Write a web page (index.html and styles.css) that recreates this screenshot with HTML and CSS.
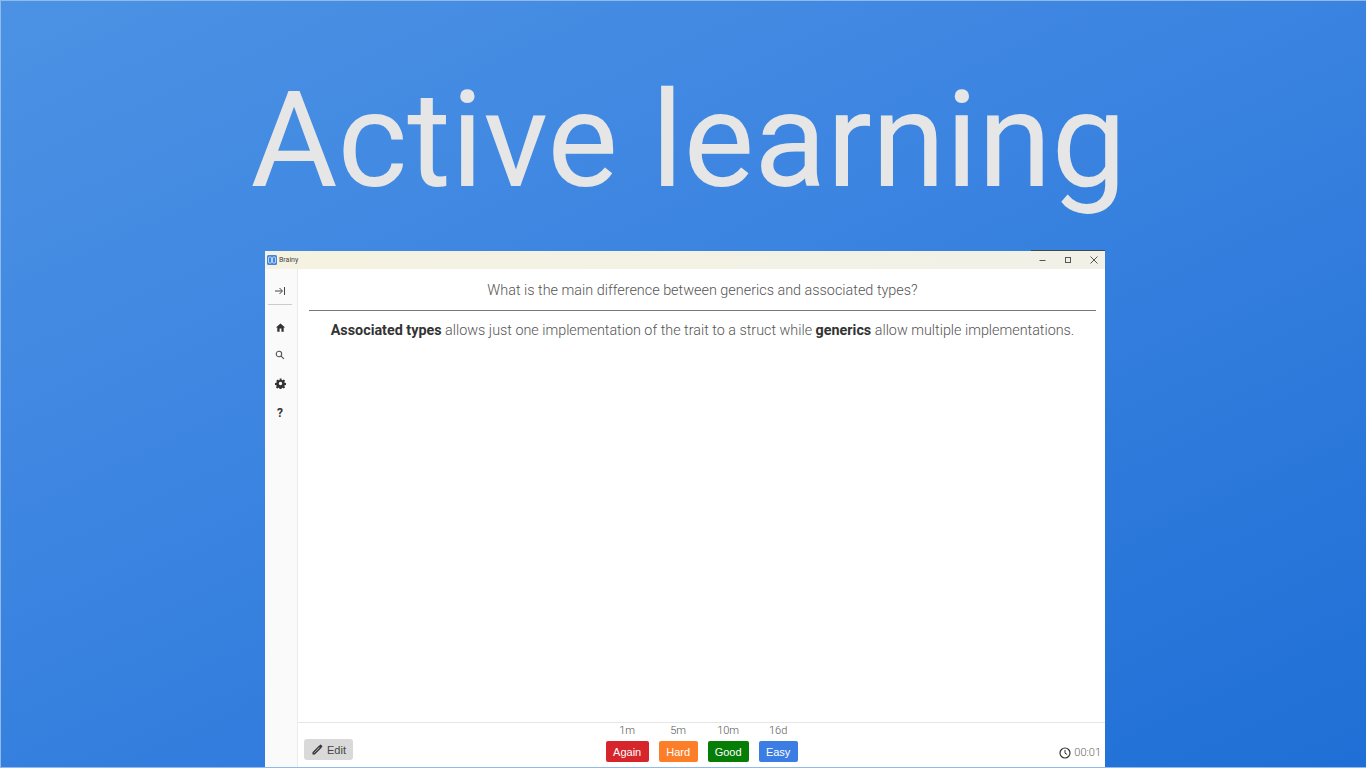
FILE: index.html
```html
<!DOCTYPE html>
<html lang="en">
<head>
    <meta charset="UTF-8" />
    <meta name="viewport" content="width=device-width, initial-scale=1" />
    <title>Active learning</title>
    <link rel="stylesheet" href="styles.css">
</head>
<body>
    <div class="slide">
        <h1 class="headline">Active learning</h1>

        <div class="window">
            <div class="titlebar">
                <svg class="app-icon" viewBox="0 0 10 10" width="10" height="10">
                    <rect width="10" height="10" rx="1.5" fill="#3f86e0" />
                    <rect x="1.5" y="2" width="3" height="6" rx="1" fill="none" stroke="#dbe9fa" stroke-width="0.8" />
                    <rect x="5.5" y="2" width="3" height="6" rx="1" fill="none" stroke="#dbe9fa" stroke-width="0.8" />
                </svg>
                <span class="app-name">Brainy</span>
                <div class="window-controls">
                    <svg viewBox="0 0 10 10" width="10" height="10"><path d="M2.500 5.500h6" stroke="#555" fill="none" /></svg>
                    <svg viewBox="0 0 10 10" width="10" height="10"><rect x="2.500" y="2.500" width="5" height="5" stroke="#555" fill="none" /></svg>
                    <svg viewBox="0 0 10 10" width="10" height="10"><path d="M1.500 1.500l7 7M8.500 1.500l-7 7" stroke="#555" fill="none" /></svg>
                </div>
            </div>

            <div class="app-body">
                <nav class="sidebar">
                    <div class="nav-top">
                        <svg viewBox="0 0 12 12" width="12" height="12"><path d="M1 6h7M5.500 3l3 3-3 3M10.500 2v8" stroke="#444" stroke-width="1" fill="none" /></svg>
                    </div>
                    <div class="nav-item">
                        <svg viewBox="0 0 24 24" width="11" height="11"><path d="M10 21v-7h4v7h5v-9h3L12 3 2 12h3v9z" fill="#333" /></svg>
                    </div>
                    <div class="nav-item">
                        <svg viewBox="0 0 24 24" width="10" height="10"><circle cx="9.500" cy="9.500" r="6.500" fill="none" stroke="#555" stroke-width="2.600" /><path d="M14.500 14.500l7 7" stroke="#555" stroke-width="2.800" /></svg>
                    </div>
                    <div class="nav-item">
                        <svg viewBox="0 0 24 24" width="11" height="11"><path fill="#333" fill-rule="evenodd" d="M10 1h4l.6 3.200 1.900.8 2.700-1.800 2.800 2.800-1.800 2.700.8 1.900 3 .5v4l-3 .5-.8 1.900 1.800 2.700-2.800 2.800-2.700-1.800-1.900.8-.6 3.200h-4l-.6-3.200-1.900-.8-2.700 1.800-2.800-2.800 1.800-2.700-.8-1.900-3-.5v-4l3-.5.8-1.900L3 6l2.800-2.800 2.700 1.800 1.900-.8zM12 8.300a3.700 3.700 0 1 0 0 7.400 3.700 3.700 0 0 0 0-7.400z" /></svg>
                    </div>
                    <div class="nav-item nav-help">?</div>
                </nav>

                <main class="card-pane">
                    <div class="card">
                        <div class="question">What is the main difference between generics and associated types?</div>
                        <hr class="divider" />
                        <div class="answer"><strong>Associated types</strong> allows just one implementation of the trait to a struct while <strong>generics</strong> allow multiple implementations.</div>
                    </div>

                    <div class="footer">
                        <button class="edit-btn">
                            <svg viewBox="0 0 24 24" width="13" height="13"><path fill="none" stroke="#333" stroke-width="2.500" d="M4 17.500V20h2.500L17.800 8.900l-2.700-2.700L4 17.500z" /><path fill="#333" d="M20.700 7.040a1 1 0 0 0 0-1.410l-2.340-2.340a1 1 0 0 0-1.410 0l-1.830 1.830 3.750 3.750 1.830-1.830z" /></svg>
                            Edit
                        </button>

                        <div class="grades">
                            <div class="grade">
                                <span class="interval">1m</span>
                                <button class="grade-btn again">Again</button>
                            </div>
                            <div class="grade">
                                <span class="interval">5m</span>
                                <button class="grade-btn hard">Hard</button>
                            </div>
                            <div class="grade">
                                <span class="interval">10m</span>
                                <button class="grade-btn good">Good</button>
                            </div>
                            <div class="grade">
                                <span class="interval">16d</span>
                                <button class="grade-btn easy">Easy</button>
                            </div>
                        </div>

                        <div class="timer">
                            <svg viewBox="0 0 12 12" width="12" height="12"><circle cx="6" cy="6" r="5" fill="none" stroke="#333" stroke-width="1.200" /><path d="M6 3v3.200l2.200 1.300" fill="none" stroke="#333" /></svg>
                            <span class="timer-text">00:01</span>
                        </div>
                    </div>
                </main>
            </div>
        </div>
    </div>
</body>
</html>
```

FILE: styles.css
```css
html, body {
    margin: 0;
    height: 100%;
    overflow: hidden;
}
body {
    font-family: Roboto, "Liberation Sans", sans-serif;
}
.slide {
    box-sizing: border-box;
    width: 1366px;
    height: 768px;
    padding: 1px 0 0 1px;
    border-top: 1px solid #8fbaee;
    border-left: 1px solid #8fbaee;
    border-bottom: 1px solid #8fbaee;
    background: linear-gradient(155deg, #4c92e4 0%, #3a83e0 45%, #1f6fd6 100%);
    display: flex;
    flex-direction: column;
    align-items: center;
}
.headline {
    margin: 0 0 0 9px;
    height: 249px;
    line-height: 278px;
    font-size: 133.400px;
    font-weight: 400;
    color: #e6e6e6;
    white-space: nowrap;
}
.window {
    width: 840px;
    height: 516px;
    margin-left: 2px;
    background: #fff;
    display: flex;
    flex-direction: column;
}
.titlebar {
    position: relative;
    height: 18px;
    flex: none;
    background: linear-gradient(90deg, #f5f2e1, #f1f1e8);
    display: flex;
    align-items: center;
    padding-left: 2px;
}
/* dark sliver along the top right of the captured window */
.titlebar::before {
    content: "";
    position: absolute;
    top: -1px;
    right: 0;
    width: 74px;
    height: 1px;
    background: #3c4a50;
}
.app-icon {
    margin-right: 2px;
}
.app-name {
    font-size: 7px;
    color: #444;
}
.window-controls {
    margin-left: auto;
    display: flex;
    gap: 16px;
    padding-right: 6px;
}
.app-body {
    flex: 1;
    display: flex;
    min-height: 0;
}
.sidebar {
    width: 32px;
    flex: none;
    background: #fafafa;
    border-right: 1px solid #ececec;
    display: flex;
    flex-direction: column;
    align-items: center;
}
.nav-top {
    width: 24px;
    height: 36px;
    flex: none;
    margin-left: -2px;
    box-sizing: border-box;
    padding-top: 8px;
    border-bottom: 1px solid #ccc;
    display: flex;
    align-items: center;
    justify-content: center;
}
.nav-item {
    height: 28px;
    flex: none;
    margin-left: -2px;
    display: flex;
    align-items: center;
    justify-content: center;
}
.nav-top + .nav-item {
    margin-top: 8px;
}
.nav-help {
    padding-top: 2px;
    font-size: 12px;
    font-weight: 700;
    color: #333;
}
.card-pane {
    flex: 1;
    min-width: 0;
    display: flex;
    flex-direction: column;
}
.card {
    flex: 1;
    padding: 0 9px 0 11px;
    text-align: center;
    color: #555;
}
.question {
    height: 41px;
    line-height: 44px;
    font-size: 14.400px;
    font-weight: 300;
}
.divider {
    margin: 0;
    border: none;
    border-top: 1px solid #777;
}
.answer {
    margin-top: 10px;
    line-height: 20px;
    font-size: 14.350px;
    font-weight: 300;
}
.answer strong {
    font-weight: 700;
    color: #333;
}
.footer {
    height: 45px;
    flex: none;
    border-top: 1px solid #e6e6e6;
    box-sizing: border-box;
    padding: 0 4px 0 6px;
    display: flex;
    align-items: flex-end;
    justify-content: space-between;
}
.edit-btn {
    width: 49px;
    height: 21px;
    margin-bottom: 7px;
    padding: 0;
    border: none;
    border-radius: 3px;
    background: #d9d9d9;
    color: #444;
    font-family: "Liberation Sans", Arial, sans-serif;
    font-size: 11px;
    display: flex;
    align-items: center;
    justify-content: center;
    gap: 3px;
}
.grades {
    display: flex;
    gap: 10px;
    margin-right: 9px;
    margin-bottom: 5px;
}
.grade {
    display: flex;
    flex-direction: column;
    align-items: center;
}
.interval {
    font-size: 11px;
    line-height: 14px;
    margin-bottom: 3px;
    font-weight: 300;
    color: #555;
}
.grade-btn {
    height: 21px;
    padding: 0;
    border: none;
    border-radius: 2px;
    color: #fff;
    font-family: "Liberation Sans", Arial, sans-serif;
    font-size: 11px;
}
.again {
    width: 43px;
    background: #d7262b;
}
.hard {
    width: 39px;
    background: #fd7e28;
}
.good {
    width: 41px;
    background: #067d06;
}
.easy {
    width: 39px;
    background: #3b7de3;
}
.timer {
    display: flex;
    align-items: center;
    gap: 3px;
    margin-bottom: 8px;
}
.timer-text {
    font-size: 11px;
    font-weight: 300;
    color: #666;
}
```
